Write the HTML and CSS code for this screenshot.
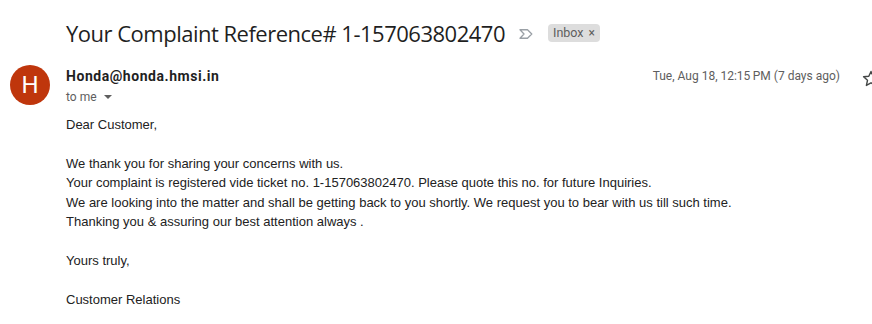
FILE: index.html
```html
<!DOCTYPE html>
<html>
<head>
<meta charset="utf-8">
<link rel="stylesheet" href="styles.css">
</head>
<body>
<div class="mail">
  <div class="subject-row">
    <h1 class="subject">Your Complaint Reference# 1-157063802470</h1>
    <svg class="importance" width="14" height="10" viewBox="0 0 14 10"><path d="M1 0.75 H8.5 L12.8 5 L8.5 9.25 H1 L5 5 Z" fill="none" stroke="#9aa0a6" stroke-width="1.3" stroke-linejoin="round"/></svg>
    <span class="chip">Inbox <span class="chip-x">×</span></span>
  </div>
  <div class="header-row">
    <div class="avatar">H</div>
    <div class="sender">
      <div class="sender-top">
        <span class="sender-name">Honda@honda.hmsi.in</span>
        <span class="date">Tue, Aug 18, 12:15&#8201;PM (7 days ago)</span>
        <svg class="star" width="20" height="20" viewBox="0 0 20 20"><path d="M10 2.5 L12.2 7.3 L17.4 7.8 L13.5 11.3 L14.6 16.4 L10 13.8 L5.4 16.4 L6.5 11.3 L2.6 7.8 L7.8 7.3 Z" fill="none" stroke="#444746" stroke-width="1.4" stroke-linejoin="round"/></svg>
      </div>
      <div class="to">to me <span class="caret"></span></div>
    </div>
  </div>
  <div class="body">
    <div>Dear Customer,</div>
    <div><br></div>
    <div>We thank you for sharing your concerns with us.</div>
    <div>Your complaint is registered vide ticket no. 1-157063802470. Please quote this no. for future Inquiries.</div>
    <div>We are looking into the matter and shall be getting back to you shortly. We request you to bear with us till such time.</div>
    <div>Thanking you &amp; assuring our best attention always .</div>
    <div><br></div>
    <div>Yours truly,</div>
    <div><br></div>
    <div>Customer Relations</div>
  </div>
</div>
</body>
</html>
```
FILE: styles.css
```css
html, body {
  margin: 0;
  padding: 0;
  background: #ffffff;
}
.mail {
  width: 872px;
  height: 324px;
  overflow: hidden;
}
.subject-row {
  display: flex;
  align-items: center;
  padding: 18px 0 0 66px;
  height: 30px;
}
.subject {
  margin: 0;
  font-family: "Open Sans", sans-serif;
  font-weight: 400;
  font-size: 22px;
  line-height: 30px;
  color: #1f1f1f;
  letter-spacing: -0.5px;
}
.importance {
  margin-left: 14px;
  margin-top: 1px;
}
.chip {
  margin-left: 15px;
  background: #dddddd;
  border-radius: 4px;
  padding: 0 5px;
  height: 18px;
  line-height: 18px;
  font-family: Roboto, Arial, sans-serif;
  font-size: 12.5px;
  color: #5e5e5e;
  display: inline-flex;
  align-items: center;
  gap: 5px;
}
.chip-x {
  font-size: 12px;
  color: #5e5e5e;
}
.header-row {
  display: flex;
  margin-top: 17px;
}
.avatar {
  width: 40px;
  height: 40px;
  border-radius: 50%;
  background: #bf360c;
  color: #fff;
  font-family: Roboto, Arial, sans-serif;
  font-size: 24px;
  line-height: 40px;
  text-align: center;
  margin-left: 10px;
  flex: none;
}
.sender {
  flex: 1;
  margin-left: 16px;
}
.sender-top {
  display: flex;
  align-items: center;
  height: 22px;
  margin-right: -9px;
}
.sender-name {
  font-family: Roboto, Arial, sans-serif;
  font-weight: 700;
  font-size: 14px;
  color: #1f1f1f;
  flex: 1;
  letter-spacing: 0.55px;
}
.date {
  font-family: Roboto, Arial, sans-serif;
  font-size: 12px;
  color: #5e5e5e;
  margin-right: 1px;
}
.star {
  margin-left: 20px;
  margin-top: 6px;
  flex: none;
}
.to {
  font-family: Roboto, Arial, sans-serif;
  font-size: 12px;
  color: #5e5e5e;
  line-height: 20px;
  display: flex;
  align-items: center;
}
.caret {
  display: inline-block;
  width: 0;
  height: 0;
  border-left: 4px solid transparent;
  border-right: 4px solid transparent;
  border-top: 4px solid #5e5e5e;
  margin-left: 7px;
}
.body {
  margin-top: 8px;
  padding-left: 66px;
  font-family: Arial, "Liberation Sans", sans-serif;
  font-size: 13px;
  line-height: 19.45px;
  color: #222222;
}
```
